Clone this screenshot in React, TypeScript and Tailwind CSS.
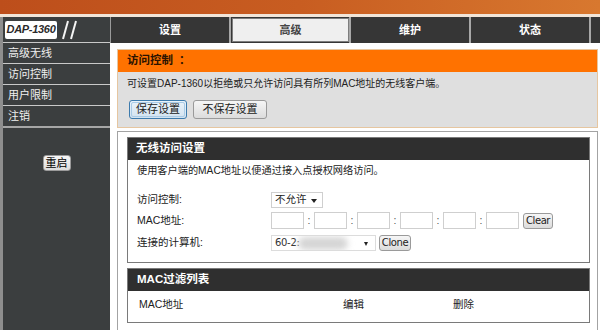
import React from "react";

function Btn({ children, className = "" }: { children: React.ReactNode; className?: string }) {
  return (
    <div
      className={`flex items-center justify-center rounded-[3px] border border-[#9a9a9a] bg-gradient-to-b from-[#f6f6f6] to-[#dcdcdc] text-[#222] ${className}`}
    >
      {children}
    </div>
  );
}

function MacBox() {
  return <div className="w-[33px] h-[17px] border border-[#cfcfcf] bg-white" />;
}

function Colon() {
  return <div className="w-[10px] text-center text-[#555] leading-[17px]">:</div>;
}

export default function App() {
  return (
    <div className="w-[600px] h-[330px] overflow-hidden bg-white font-['Liberation_Sans','Noto_Sans_CJK_SC',sans-serif] text-[10.5px] text-[#222]">
      <div className="h-[14px] bg-gradient-to-r from-[#bd4e1b] via-[#c85d21] to-[#d8782f]" />
      <div className="h-[3px] bg-[#f2e5d8]" />
      <div className="flex h-[313px]">
        {/* Sidebar */}
        <aside className="w-[110px] shrink-0 bg-[#3b3e3f] border-l-[3px] border-[#8e8e8e] flex flex-col">
          <div className="h-[25px] flex items-center pl-[2px] gap-[3px]">
            <div className="w-[52px] h-[18px] bg-white rounded-[2px] flex items-center justify-center overflow-hidden">
              <span className="whitespace-nowrap italic font-bold text-[11px] text-[#2a2a2a] tracking-[-0.3px] font-['Liberation_Sans',sans-serif]">
                DAP-1360
              </span>
            </div>
            <svg width="20" height="20" viewBox="0 0 20 20">
              <line x1="3" y1="19" x2="8" y2="1" stroke="#f4f4f4" strokeWidth="2" />
              <line x1="11" y1="19" x2="16" y2="1" stroke="#f4f4f4" strokeWidth="2" />
            </svg>
          </div>
          <div className="h-[1px] bg-[#c9c9c9]" />
          {["高级无线", "访问控制", "用户限制", "注销"].map((t, i) => (
            <React.Fragment key={t}>
              <div className="h-[20px] flex items-center pl-[5px] text-[#f0f0f0] text-[11px]">{t}</div>
              <div className={i === 3 ? "h-[2px] bg-[#a6a6a6]" : "h-[1px] bg-[#c9c9c9]"} />
            </React.Fragment>
          ))}
          <div className="flex justify-center mt-[27px]">
            <Btn className="w-[28px] h-[16px] text-[11px] text-black rounded-[2px]">重启</Btn>
          </div>
        </aside>

        {/* Main */}
        <main className="flex-1 flex flex-col min-w-0">
          <nav className="h-[26px] shrink-0 bg-[#363636] border-l border-[#9a9a9a] flex">
            <div className="w-[120px] border-r-2 border-[#a8a8a8] flex items-center justify-center text-white font-bold text-[11px]">
              设置
            </div>
            <div className="w-[120px] border-r-2 border-[#a8a8a8] py-[1px] pl-[1px]">
              <div className="h-full bg-[#efefef] border border-[#7d7d7d] flex items-center justify-center text-[#454545] font-bold text-[11px]">
                高级
              </div>
            </div>
            <div className="w-[120px] border-r-2 border-[#a8a8a8] flex items-center justify-center text-white font-bold text-[11px]">
              维护
            </div>
            <div className="w-[120px] border-r-2 border-[#a8a8a8] flex items-center justify-center text-white font-bold text-[11px]">
              状态
            </div>
          </nav>

          <div className="flex-1 pl-[7px] pr-[2px] pt-[6px] flex flex-col">
            {/* Orange box */}
            <div className="border border-[#e6c6a0] shrink-0">
              <div className="h-[22px] bg-[#ff7200] flex items-center pl-[9px] font-bold text-[11.5px] text-[#2b1300]">
                <span>访问控制</span>
                <span className="ml-[6px]">：</span>
              </div>
              <div className="bg-[#dfdfdf] h-[55px] pl-[9px] pt-[5px]">
                <div className="h-[14px] leading-[14px] text-[10px] whitespace-nowrap">
                  可设置DAP-1360以拒绝或只允许访问具有所列MAC地址的无线客户端。
                </div>
                <div className="flex gap-[6px] mt-[9px] ml-[2px]">
                  <div className="w-[58px] h-[19px] rounded-[3px] border border-[#3d7bad] bg-gradient-to-b from-[#eaf3fa] to-[#d3e3f0] p-[1px]">
                    <div className="h-full rounded-[2px] border border-[#a9cbe6] flex items-center justify-center text-[11px] text-[#222]">
                      保存设置
                    </div>
                  </div>
                  <Btn className="w-[74px] h-[19px] text-[11px]">不保存设置</Btn>
                </div>
              </div>
            </div>

            {/* Outer panel */}
            <div className="mt-[3px] flex-1 border border-[#a3a3a3] border-b-0 pl-[9px] pr-[7px] pt-[5px]">
              {/* Section 1 */}
              <div className="border border-[#7a7a7a] h-[126px]">
                <div className="h-[22px] bg-[#2f2f2f] flex items-center pl-[8px] text-white font-bold text-[11.5px]">
                  无线访问设置
                </div>
                <div className="pl-[9px] pt-[3px]">
                  <div className="h-[16px] leading-[16px] text-[10.2px] whitespace-nowrap">使用客户端的MAC地址以便通过接入点授权网络访问。</div>
                  <div className="flex items-center h-[18px] mt-[12px]">
                    <div className="w-[134px]">访问控制:</div>
                    <div className="w-[52px] h-[16px] border border-[#cfcfcf] bg-white flex items-center pl-[3px] relative">
                      <span>不允许</span>
                      <svg className="absolute right-[5px] top-[6px]" width="6" height="4" viewBox="0 0 6 4">
                        <path d="M0 0 H6 L3 4 Z" fill="#222" />
                      </svg>
                    </div>
                  </div>
                  <div className="flex items-center h-[17px] mt-[3px]">
                    <div className="w-[134px]">MAC地址:</div>
                    <MacBox />
                    <Colon />
                    <MacBox />
                    <Colon />
                    <MacBox />
                    <Colon />
                    <MacBox />
                    <Colon />
                    <MacBox />
                    <Colon />
                    <MacBox />
                    <Btn className="ml-[4px] w-[30px] h-[16px] text-[10px] font-['DejaVu_Sans',sans-serif] tracking-[-0.4px]">
                      Clear
                    </Btn>
                  </div>
                  <div className="flex items-center h-[17px] mt-[5px]">
                    <div className="w-[134px]">连接的计算机:</div>
                    <div className="w-[105px] h-[16px] border border-[#dcdcdc] bg-white flex items-center pl-[3px] relative overflow-hidden">
                      <span className="text-[10px] text-[#333] font-['DejaVu_Sans',sans-serif] tracking-[-0.3px]">60-2:</span>
                      <div className="absolute left-[26px] top-[1px] w-[50px] h-[13px] bg-[#d5d5d5] rounded-full blur-[3px]" />
                      <svg className="absolute right-[7px] top-[6px]" width="4" height="4" viewBox="0 0 4 4">
                        <path d="M0 0 H4 L2 4 Z" fill="#222" />
                      </svg>
                    </div>
                    <Btn className="ml-[3px] w-[32px] h-[16px] text-[10px] font-['DejaVu_Sans',sans-serif] tracking-[-0.4px]">
                      Clone
                    </Btn>
                  </div>
                </div>
              </div>

              {/* Section 2 */}
              <div className="border border-[#7a7a7a] h-[55px] mt-[5px]">
                <div className="h-[22px] bg-[#2f2f2f] flex items-center pl-[9px] text-white font-bold text-[11.5px]">
                  MAC过滤列表
                </div>
                <div className="flex items-center h-[28px] pl-[11px]">
                  <div className="w-[204px]">MAC地址</div>
                  <div className="w-[110px]">编辑</div>
                  <div>删除</div>
                </div>
              </div>
            </div>
          </div>
        </main>
      </div>
    </div>
  );
}
